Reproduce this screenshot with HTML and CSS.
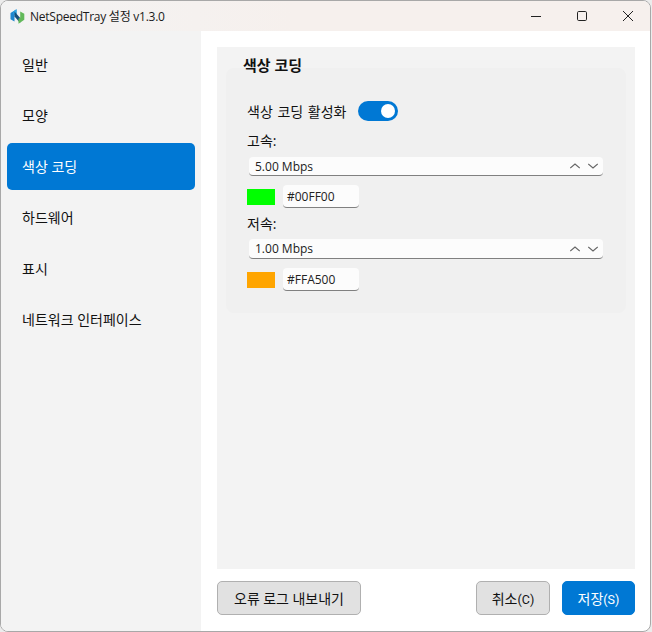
FILE: index.html
```html
<!DOCTYPE html>
<html lang="ko">
<head>
<meta charset="utf-8">
<title>NetSpeedTray 설정 v1.3.0</title>
<link rel="stylesheet" href="styles.css">
</head>
<body>
<div class="window">
  <header class="titlebar">
    <svg class="app-icon" width="15" height="15" viewBox="0 0 15 15">
      <path d="M0.5 4 L6.5 0.3 V5 L4.5 6.2 V12.6 L0.5 10.2 Z" fill="#1f86cf"/>
      <path d="M3.5 2.2 L6.5 0.3 V5 L4.5 6.2 L3.5 5 Z" fill="#2fa8e6"/>
      <path d="M4.5 2.4 L10.2 9 V14 L4.5 7.4 Z" fill="#174f7c"/>
      <path d="M14.3 4.8 V10.8 L8.5 14.7 V9.8 L10.2 8.8 V2.4 Z" fill="#62b95a"/>
    </svg>
    <span class="title-text">NetSpeedTray 설정 v1.3.0</span>
    <div class="controls">
      <button class="ctl"><svg width="12" height="12" viewBox="0 0 12 12"><path d="M1 6.5H11" stroke="#222" stroke-width="1" fill="none"/></svg></button>
      <button class="ctl"><svg width="12" height="12" viewBox="0 0 12 12"><rect x="1.5" y="1.5" width="9" height="9" rx="1.2" stroke="#222" stroke-width="1" fill="none"/></svg></button>
      <button class="ctl"><svg width="12" height="12" viewBox="0 0 12 12"><path d="M1 1L11 11M11 1L1 11" stroke="#222" stroke-width="1" fill="none"/></svg></button>
    </div>
  </header>
  <div class="main">
    <nav class="sidebar">
      <div class="nav-item">일반</div>
      <div class="nav-item">모양</div>
      <div class="nav-item active">색상 코딩</div>
      <div class="nav-item">하드웨어</div>
      <div class="nav-item">표시</div>
      <div class="nav-item">네트워크 인터페이스</div>
    </nav>
    <section class="content">
      <div class="panel">
        <div class="group-title">색상 코딩</div>
        <div class="group">
          <div class="toggle-row">
            <span class="toggle-label">색상 코딩 활성화</span>
            <span class="toggle"><span class="knob"></span></span>
          </div>
          <div class="field-label">고속:</div>
          <div class="spin">
            <span class="spin-value">5.00 Mbps</span>
            <svg class="chev" width="10" height="6" viewBox="0 0 10 6"><path d="M0.3 5L5 1L9.7 5" stroke="#666" stroke-width="1.1" fill="none"/></svg>
            <svg class="chev" width="10" height="6" viewBox="0 0 10 6"><path d="M0.3 1L5 5L9.7 1" stroke="#666" stroke-width="1.1" fill="none"/></svg>
          </div>
          <div class="color-row">
            <span class="swatch green"></span>
            <span class="hex">#00FF00</span>
          </div>
          <div class="field-label low">저속:</div>
          <div class="spin">
            <span class="spin-value">1.00 Mbps</span>
            <svg class="chev" width="10" height="6" viewBox="0 0 10 6"><path d="M0.3 5L5 1L9.7 5" stroke="#666" stroke-width="1.1" fill="none"/></svg>
            <svg class="chev" width="10" height="6" viewBox="0 0 10 6"><path d="M0.3 1L5 5L9.7 1" stroke="#666" stroke-width="1.1" fill="none"/></svg>
          </div>
          <div class="color-row">
            <span class="swatch orange"></span>
            <span class="hex">#FFA500</span>
          </div>
        </div>
      </div>
      <footer class="footer">
        <button class="btn export">오류 로그 내보내기</button>
        <span class="spacer"></span>
        <button class="btn cancel">취소<span class="mnemonic">(C)</span></button>
        <button class="btn save">저장<span class="mnemonic">(S)</span></button>
      </footer>
    </section>
  </div>
</div>
</body>
</html>
```
FILE: styles.css
```css
* { box-sizing: border-box; }
html, body { margin: 0; padding: 0; background: #ececec; }
body {
  width: 652px;
  height: 632px;
  overflow: hidden;
  font-family: "Open Sans", "Noto Sans CJK KR", sans-serif;
  font-size: 13px;
  color: #111;
}
.window {
  width: 651px;
  height: 632px;
  border: 1px solid #a8a8a8;
  border-radius: 8px;
  overflow: hidden;
  display: flex;
  flex-direction: column;
  background: #fff;
}
.titlebar {
  height: 30px;
  flex: none;
  display: flex;
  align-items: center;
  padding-left: 9px;
  background: linear-gradient(90deg, #f3f3f3 0%, #f6f0ed 45%, #f6f0ed 100%);
}
.app-icon { flex: none; }
.title-text { margin-left: 5px; font-size: 12px; letter-spacing: -0.25px; color: #1a1a1a; }
.controls { margin-left: auto; margin-right: -1px; display: flex; }
.ctl {
  width: 46px;
  height: 30px;
  border: 0;
  padding: 0;
  background: none;
  display: flex;
  align-items: center;
  justify-content: center;
}
.main { flex: 1; display: flex; min-height: 0; }
.sidebar {
  width: 200px;
  flex: none;
  background: #f3f3f3;
  padding: 10px 6px 0;
  display: flex;
  flex-direction: column;
  gap: 4px;
}
.nav-item {
  width: 188px;
  height: 47px;
  padding: 0 0 2px 15px;
  display: flex;
  align-items: center;
  font-size: 14px;
  border-radius: 5px;
}
.nav-item.active { background: #0078d4; color: #fff; }
.content {
  flex: 1;
  display: flex;
  flex-direction: column;
  padding: 16px;
  min-width: 0;
}
.panel {
  width: 418px;
  height: 522px;
  background: #f3f3f3;
  padding: 8px 9px 0;
}
.group-title {
  font-size: 15px;
  font-weight: 700;
  line-height: 20px;
  padding-left: 17px;
  height: 13px;
  position: relative;
  z-index: 1;
}
.group {
  width: 400px;
  height: 245px;
  background: #f0f0f0;
  border-radius: 8px;
  padding: 32px 23px 0 21px;
  display: flex;
  flex-direction: column;
}
.toggle-row {
  display: flex;
  align-items: center;
  gap: 12px;
  height: 22px;
  font-size: 14px;
}
.toggle-label { word-spacing: 1px; }
.toggle {
  width: 40px;
  height: 20px;
  border-radius: 10px;
  background: #0078d4;
  display: flex;
  align-items: center;
  justify-content: flex-end;
  padding-right: 3px;
}
.knob { width: 14px; height: 14px; border-radius: 50%; background: #fff; }
.field-label { font-size: 14px; line-height: 18px; margin-top: 10px; }
.field-label.low { margin-top: 7px; }
.spin {
  width: 354px;
  height: 19px;
  margin: 7px 0 0 2px;
  background: #fcfcfc;
  border-radius: 4px;
  border-bottom: 1px solid #808080;
  display: flex;
  align-items: center;
  gap: 8px;
  padding: 0 5px 0 6px;
}
.field-label.low + .spin { margin-top: 6px; height: 20px; }
.spin-value { margin-right: auto; font-size: 12px; color: #222; }
.color-row { display: flex; align-items: center; gap: 8px; margin-top: 9px; height: 23px; }
.swatch { width: 28px; height: 16px; }
.swatch.green { background: #00ff00; }
.swatch.orange { background: #ffa500; }
.hex {
  width: 76px;
  height: 23px;
  background: #fcfcfc;
  border-radius: 4px;
  border-bottom: 1px solid #808080;
  display: flex;
  align-items: center;
  padding-left: 4px;
  font-size: 12px;
  color: #222;
}
.footer {
  display: flex;
  align-items: center;
  gap: 12px;
  margin-top: 12px;
  width: 418px;
}
.spacer { flex: 1; }
.btn {
  height: 34px;
  border-radius: 5px;
  font-family: "Roboto", "Noto Sans CJK KR", sans-serif;
  font-size: 14px;
  padding: 0;
  border: 1px solid #b0b0b0;
  background: #e1e1e1;
  color: #111;
}
.mnemonic { font-size: 12.5px; }
.export { width: 144px; }
.cancel { width: 74px; }
.save { width: 73px; background: #0078d4; border-color: #0078d4; color: #fff; }
```
